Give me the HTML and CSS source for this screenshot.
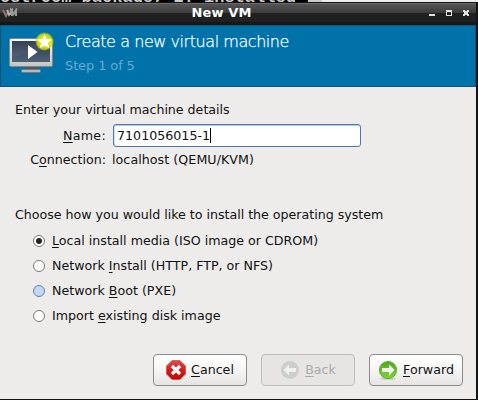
FILE: index.html
```html
<!DOCTYPE html>
<html lang="en">
<head>
<meta charset="utf-8">
<title>New VM</title>
<link rel="stylesheet" href="styles.css">
</head>
<body>
<div class="terminal"><span class="terminal-text">ostroom package, 2. installed</span><span class="scrollbar"></span></div>
<main class="window">
  <header class="titlebar">
    <svg class="vm-logo" width="16" height="10" viewBox="0 0 16 10" fill="none"><path d="M1 2l3 6 3-6" stroke="#8d7378" stroke-width="2"/><path d="M5 2l2 5 3-5v6" stroke="#b8b8b8" stroke-width="1.6"/><path d="M9 7V2l2.500 4L14 2v6" stroke="#999" stroke-width="2"/></svg>
    <span class="window-title">New VM</span>
    <svg class="controls" width="42" height="8" viewBox="0 0 42 8"><path d="M0 5h6v2H0z" fill="#e4e4e4"/><path d="M17 1h6v6h-6zM18 3v3h4V3z" fill="#e4e4e4" fill-rule="evenodd"/><path d="M34 1h2v1h2V1h2v2h-1v2h1v2h-2V6h-2v1h-2V5h1V3h-1z" fill="#e4e4e4"/></svg>
  </header>
  <section class="banner">
    <svg class="monitor" width="46" height="42" viewBox="0 0 46 42">
      <defs>
        <linearGradient id="screen" x2="0" y2="1"><stop stop-color="#29374a"/><stop offset="1" stop-color="#536176"/></linearGradient>
        <linearGradient id="frame" x2="0" y2="1"><stop stop-color="#fafafa"/><stop offset="1" stop-color="#c4c4c4"/></linearGradient>
        <radialGradient id="glow"><stop offset=".55" stop-color="#e6e600"/><stop offset=".8" stop-color="#d3dc12" stop-opacity=".85"/><stop offset="1" stop-color="#c8d820" stop-opacity="0"/></radialGradient>
      </defs>
      <path d="M17 34h11v5H17z" fill="#555"/>
      <rect x="12.500" y="37.500" width="19" height="3" rx="1" fill="#b8b8b8" stroke="#777"/>
      <rect x=".5" y="6.500" width="43" height="28" rx="1.500" fill="url(#frame)" stroke="#858585"/>
      <rect x="3" y="9" width="38" height="21" fill="url(#screen)"/>
      <path d="M3 9h38v7L3 25z" fill="#fff" opacity=".06"/>
      <path d="M19 13l9.500 7-9.500 7z" fill="#fff"/>
      <circle cx="35.500" cy="9.500" r="9.500" fill="url(#glow)"/>
      <path d="M35.500 2.500l2 4.500 5 .5-3.700 3.500L40.300 16l-4.800-2.500-4.800 2.500 1.500-5-3.700-3.500 5-.5z" fill="#fff"/>
    </svg>
    <div class="heading"><h1>Create a new virtual machine</h1><p>Step 1 of 5</p></div>
  </section>
  <form class="content">
    <p class="intro">Enter your virtual machine details</p>
    <div class="details">
      <label class="name-label"><u>N</u>ame:</label>
      <div class="entry"><span>7101056015-1</span><i class="caret"></i></div>
      <span class="connection-label">C<u>o</u>nnection:</span>
      <span class="connection">localhost (QEMU/KVM)</span>
    </div>
    <p class="choose">Choose how you would like to install the operating system</p>
    <div class="options">
      <label><i class="radio selected"></i><span><u>L</u>ocal install media (ISO image or CDROM)</span></label>
      <label><i class="radio"></i><span>Network <u>I</u>nstall (HTTP, FTP, or NFS)</span></label>
      <label><i class="radio hovered"></i><span>Network <u>B</u>oot (PXE)</span></label>
      <label><i class="radio"></i><span>Import <u>e</u>xisting disk image</span></label>
    </div>
    <div class="actions">
      <button type="button"><svg width="20" height="20" viewBox="0 0 20 20"><defs><linearGradient id="red" x2="0" y2="1"><stop stop-color="#d8504c"/><stop offset=".5" stop-color="#d21c1c"/><stop offset="1" stop-color="#cc0000"/></linearGradient></defs><path d="M6 .5h8L19.500 6v8L14 19.500H6L.5 14V6z" fill="url(#red)" stroke="#c44a48" stroke-width=".7"/><path d="M6 6l8 8M14 6l-8 8" stroke="#fff" stroke-width="3.200"/></svg><span><u>C</u>ancel</span></button>
      <button type="button" class="disabled"><svg width="20" height="20" viewBox="0 0 20 20"><circle cx="10" cy="10" r="9" fill="#ccceca"/><path d="M3.500 10L9 4.500V8h7v4H9v3.500z" fill="#f0f0ee"/></svg><span><u>B</u>ack</span></button>
      <button type="button"><svg width="20" height="20" viewBox="0 0 20 20"><defs><linearGradient id="green" x2="0" y2="1"><stop stop-color="#4faa16"/><stop offset="1" stop-color="#7dd536"/></linearGradient></defs><ellipse cx="10" cy="18.500" rx="8" ry="1.500" fill="#aaa" opacity=".5"/><circle cx="10" cy="10" r="8.600" fill="url(#green)" stroke="#4ca51b" stroke-width=".8"/><path d="M16.500 10L11 4.500V8H4v4h7v3.500z" fill="#f4f4f0"/></svg><span><u>F</u>orward</span></button>
    </div>
  </form>
</main>
</body>
</html>
```

FILE: styles.css
```css
* { box-sizing: border-box; }
body { margin: 0; width: 478px; height: 400px; overflow: hidden; background: #111315; color: #111; font: 12.65px/16px "DejaVu Sans", sans-serif; }
h1, p { margin: 0; font-weight: 400; }
u { text-decoration: underline; text-decoration-thickness: 1px; text-underline-offset: 2px; }
.terminal { height: 2px; display: flex; align-items: flex-end; overflow: hidden; background: #000; color: #ccc; }
.terminal-text { width: 308px; flex: none; white-space: nowrap; font: bold 17px/8px "Liberation Mono", monospace; }
.scrollbar { height: 2px; flex: 1; background: #eee; border-left: 14px solid #ccc; }
.window { height: 397px; border-right: 2px solid #111315; background: #edeceb; }
.titlebar { height: 23px; display: grid; grid-template-columns: 97px 1fr 127px; align-items: center; padding: 0 5px 0 2px; background: linear-gradient(#151515 0 1px, #686868 1px 2px, #555 2px, #3b3b3b 11px, #202020 11px 20px, #171717 20px); }
.window-title { color: #fff; text-align: center; font-size: 13px; letter-spacing: .15px; font-weight: 700; margin-top: -2px; }
.vm-logo { margin-top: -2px; }
.controls { justify-self: end; margin-top: -1px; }
.banner { height: 62px; display: flex; padding: 6px 0 0 8px; border: 1px solid #175271; background: #0072aa; color: #fff; }
.monitor { margin-right: 10px; }
h1 { font-size: 16px; line-height: 20px; letter-spacing: -.44px; font-weight: 200; -webkit-text-stroke: .25px #fff; }
.heading p { color: #62abd6; font-size: 13px; line-height: 16px; letter-spacing: -.12px; margin-top: 6px; }
.content { padding: 15px 13px 0 15px; }
.intro { height: 22px; }
.details { display: grid; grid-template-columns: 91px 248px; grid-template-rows: 23px 20px; column-gap: 7px; row-gap: 3px; align-items: center; }
.name-label, .connection-label { text-align: right; }
.name-label { letter-spacing: .3px; }
.intro, .choose { letter-spacing: -.02px; }
.entry { height: 23px; display: flex; align-items: center; padding-left: 3px; background: #fff; border: 1px solid #4e79ac; border-radius: 3px; box-shadow: inset 0 1px #b4cbe5, inset 1px 0 #d2dfed; }
.caret { width: 1px; height: 15px; background: #000; }
.connection { margin-left: -1px; letter-spacing: .06px; }
.choose { margin-top: 37px; }
.options { display: grid; grid-auto-rows: 25px; margin: 5px 0 0 18px; }
.options label { display: flex; align-items: center; gap: 7px; }
.radio { width: 12px; height: 12px; border: 1px solid #777; border-radius: 50%; background: #fff; }
.selected { background: radial-gradient(circle, #222 2.5px, #fff 3.5px); }
.hovered { border-color: #5c82b4; background: #c5d8f0; }
.actions { display: flex; gap: 14px; justify-content: flex-end; margin-top: 26px; }
button { width: 94px; height: 32px; padding: 0; display: flex; justify-content: center; align-items: center; gap: 5px; color: #111; font: inherit; border: 1px solid #8d8b89; border-radius: 4px; background: linear-gradient(#fff, #f5f5f4 50%, #e5e4e3); }
.disabled { color: #aaa9a7; border-color: #bfbdbb; background: #e6e5e4; }
```
